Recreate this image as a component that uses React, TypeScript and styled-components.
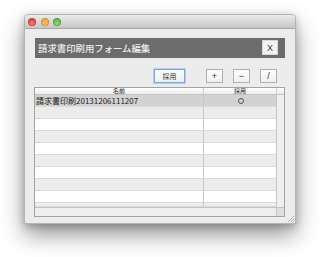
import React, { ReactElement } from 'react'
import styled, { createGlobalStyle } from 'styled-components'

const GlobalStyle = createGlobalStyle`
  html, body {
    margin: 0;
    padding: 0;
    background: #ffffff;
  }
  body {
    width: 320px;
    height: 257px;
    overflow: hidden;
    font-family: "Noto Sans CJK JP", "Liberation Sans", sans-serif;
  }
`

const Page = styled.div`
  padding: 14px 0 0 24px;
`

const Window = styled.div`
  position: relative;
  display: flex;
  flex-direction: column;
  box-sizing: border-box;
  width: 272px;
  height: 210px;
  background: #ececec;
  border: 1px solid #b4b4b4;
  border-radius: 4px 4px 0 0;
  box-shadow: 0 11px 22px rgba(0, 0, 0, 0.42), 0 2px 7px rgba(0, 0, 0, 0.2);
`

const TitleBar = styled.div`
  display: flex;
  align-items: center;
  gap: 4.5px;
  height: 13px;
  padding-left: 3px;
  background: linear-gradient(#ebebeb, #d2d2d2 70%, #c4c4c4);
  border-bottom: 1px solid #a8a8a8;
  border-radius: 3px 3px 0 0;
`

const Light = styled.span<{ $color: string; $edge: string }>`
  width: 8px;
  height: 8px;
  border-radius: 50%;
  background: radial-gradient(circle at 50% 70%, #ffffff55, transparent 60%),
    ${(p) => p.$color};
  box-shadow: inset 0 0 0 0.6px ${(p) => p.$edge};
`

const Body = styled.div`
  display: flex;
  flex-direction: column;
  padding: 9px 10px 0 10px;
`

const HeaderBar = styled.div`
  display: flex;
  align-items: center;
  justify-content: space-between;
  height: 20px;
  padding: 0 7px 0 3px;
  background: #6c6c6c;
`

const Title = styled.span`
  color: #ededed;
  font-size: 9.4px;
  font-weight: 500;
  white-space: nowrap;
`

const CloseButton = styled.div`
  display: flex;
  align-items: center;
  justify-content: center;
  box-sizing: border-box;
  width: 16px;
  height: 15px;
  margin-top: -1px;
  background: #f3f3f3;
  border: 1px solid #d6d6d6;
  color: #333;
  font-family: "Liberation Sans", sans-serif;
  font-size: 9px;
`

const Toolbar = styled.div`
  display: flex;
  align-items: center;
  height: 14px;
  margin-top: 11px;
  padding-right: 8px;
  justify-content: flex-end;
`

const ToolButton = styled.div<{ $focus?: boolean; $width: number; $gap: number }>`
  display: flex;
  align-items: center;
  justify-content: center;
  box-sizing: border-box;
  width: ${(p) => p.$width}px;
  height: 14px;
  margin-left: ${(p) => p.$gap}px;
  background: linear-gradient(#fdfdfd, #f0f0f0);
  border: 1px solid ${(p) => (p.$focus ? '#79a6dc' : '#b0b0b0')};
  box-shadow: ${(p) => (p.$focus ? '0 0 0 1px #b4cff0' : 'none')};
  color: #333;
  font-size: ${(p) => (p.$focus ? '7px' : '9px')};
  font-family: ${(p) =>
    p.$focus ? '"Noto Sans CJK JP", sans-serif' : '"Liberation Sans", sans-serif'};
`

const Table = styled.div`
  display: grid;
  grid-template-columns: 168px 73px 8px;
  grid-template-rows: 7px repeat(9, 12px) 4px 9px;
  margin: 4px 0 0 -1px;
  width: 251px;
  box-sizing: border-box;
  border: 1px solid #a4a4a4;
  background: #ffffff;
`

const HeadCell = styled.div<{ $divider?: boolean }>`
  display: flex;
  align-items: center;
  justify-content: center;
  box-sizing: border-box;
  background: linear-gradient(#ffffff, #ececec);
  border-bottom: 1px solid #c4c4c4;
  border-left: ${(p) => (p.$divider ? '1px solid #cfcfcf' : 'none')};
  color: #222;
  font-size: 6px;
  line-height: 1;
`

const Cell = styled.div<{ $tone: Tone; $divider?: boolean; $center?: boolean }>`
  display: flex;
  align-items: center;
  justify-content: ${(p) => (p.$center ? 'center' : 'flex-start')};
  box-sizing: border-box;
  padding-left: 1px;
  background: ${(p) => (p.$tone === 'sel' ? '#d2d2d2' : p.$tone === 'gray' ? '#ececec' : '#ffffff')};
  border-bottom: 1px solid #dadada;
  border-left: ${(p) => (p.$divider ? '1px solid #c8c8c8' : 'none')};
  color: #1a1a1a;
  font-size: 8px;
  white-space: nowrap;
  overflow: hidden;
`

const VScroll = styled.div`
  grid-column: 3;
  grid-row: 2 / span 10;
  background: #efefef;
  border-left: 1px solid #c6c6c6;
`

const HScroll = styled.div`
  grid-column: 1 / span 2;
  grid-row: 12;
  background: #eeeeee;
  border-top: 1px solid #c4c4c4;
`

const ScrollCorner = styled.div`
  grid-column: 3;
  grid-row: 12;
  background: #dedede;
  border-top: 1px solid #c4c4c4;
  border-left: 1px solid #c6c6c6;
`

const Circle = styled.span`
  display: block;
  width: 6px;
  height: 6px;
  box-sizing: border-box;
  border: 1px solid #555;
  border-radius: 50%;
  margin-left: 1px;
`

const Grip = styled.svg`
  position: absolute;
  right: 1px;
  bottom: 1px;
`

type Tone = 'sel' | 'gray' | 'white'

// 9 full rows plus the partly visible 10th one
const rows: { name: string; used: boolean }[] = [
  { name: '請求書印刷20131206111207', used: true },
  ...Array.from({ length: 9 }, () => ({ name: '', used: false })),
]

export default function App(): ReactElement {
  return (
    <Page>
      <GlobalStyle />
      <Window>
        <TitleBar>
          <Light $color="#e2473f" $edge="#b0302a" />
          <Light $color="#eea13a" $edge="#c27d22" />
          <Light $color="#62b944" $edge="#3f8d2b" />
        </TitleBar>
        <Body>
          <HeaderBar>
            <Title>請求書印刷用フォーム編集</Title>
            <CloseButton>X</CloseButton>
          </HeaderBar>
          <Toolbar>
            <ToolButton $focus $width={31} $gap={0}>
              採用
            </ToolButton>
            <ToolButton $width={17} $gap={21}>
              +
            </ToolButton>
            <ToolButton $width={17} $gap={10}>
              −
            </ToolButton>
            <ToolButton $width={17} $gap={10}>
              /
            </ToolButton>
          </Toolbar>
          <Table>
            <HeadCell>名前</HeadCell>
            <HeadCell $divider>採用</HeadCell>
            <HeadCell $divider />
            {rows.map((r, i) => {
              const tone: Tone = i === 0 ? 'sel' : i % 2 === 1 ? 'gray' : 'white'
              return (
                <React.Fragment key={i}>
                  <Cell $tone={tone}>{r.name}</Cell>
                  <Cell $tone={tone} $divider $center>
                    {r.used && <Circle />}
                  </Cell>
                </React.Fragment>
              )
            })}
            <VScroll />
            <HScroll />
            <ScrollCorner />
          </Table>
        </Body>
        <Grip width="7" height="7" viewBox="0 0 7 7">
          <line x1="1" y1="7" x2="7" y2="1" stroke="#a0a0a0" strokeWidth="0.8" />
          <line x1="4" y1="7" x2="7" y2="4" stroke="#a0a0a0" strokeWidth="0.8" />
        </Grip>
      </Window>
    </Page>
  )
}
